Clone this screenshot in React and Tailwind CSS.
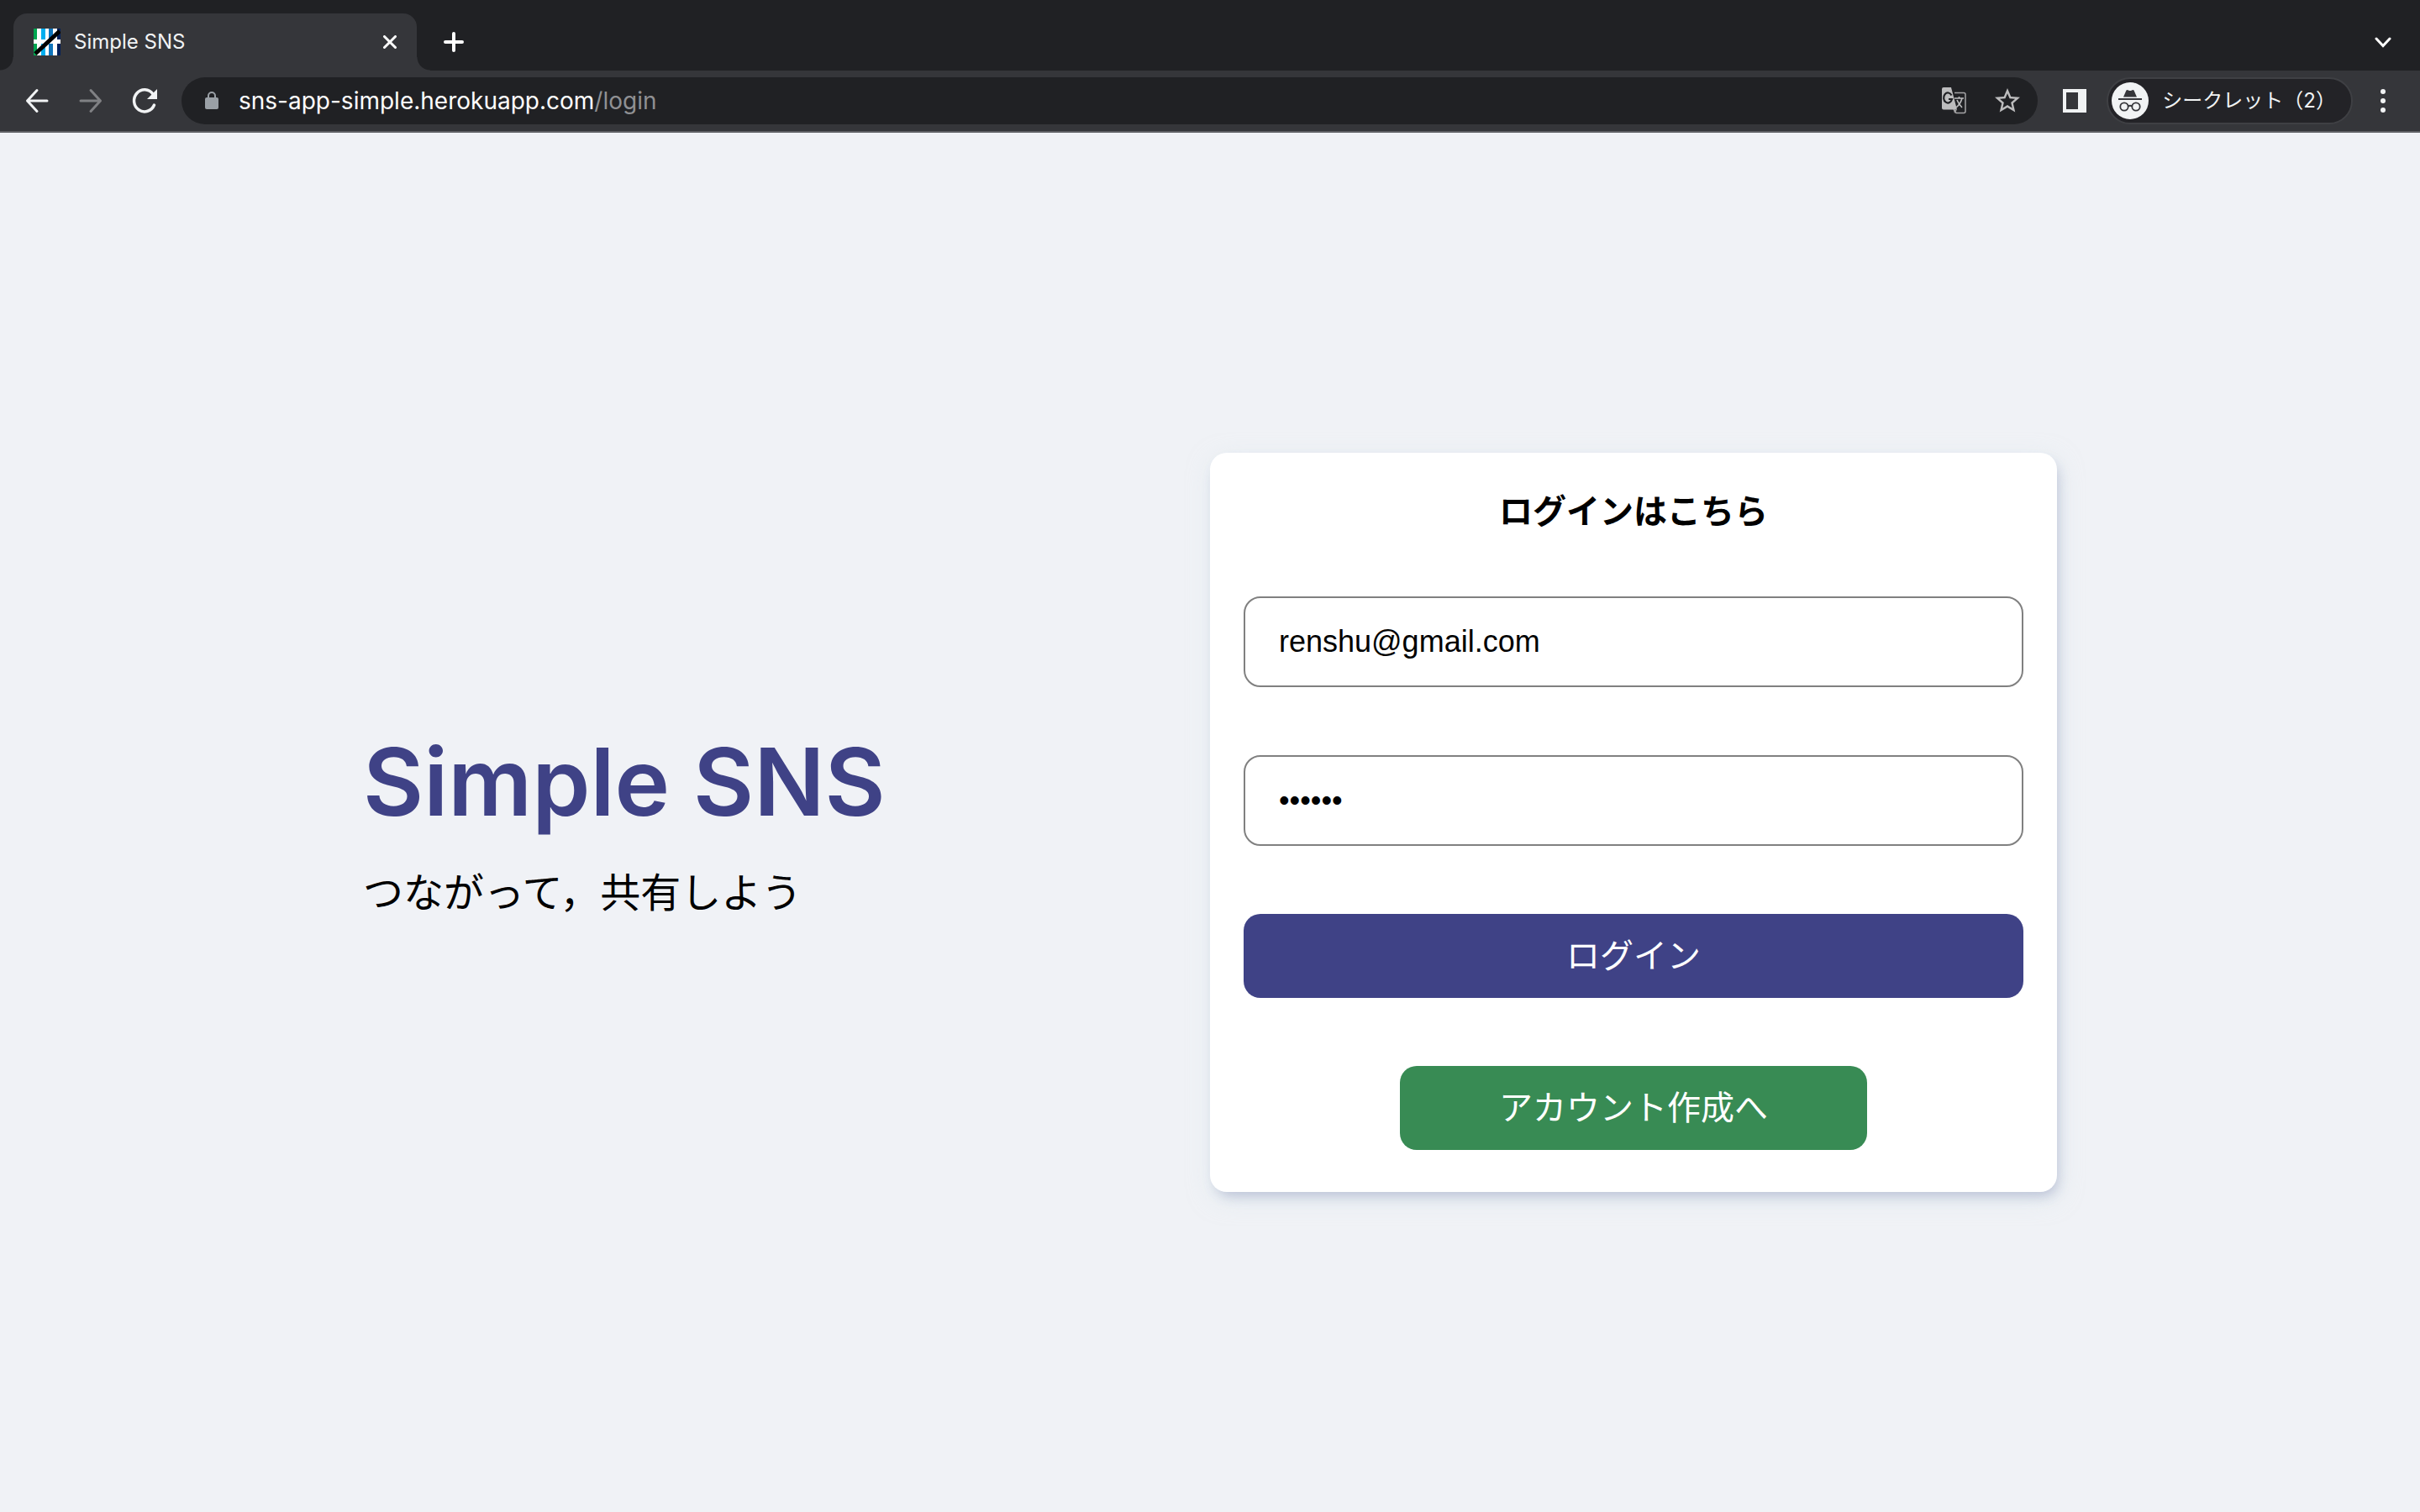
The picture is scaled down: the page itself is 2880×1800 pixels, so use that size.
import React from "react";

const jp = "font-[Inter,'Noto_Sans_CJK_JP',sans-serif]";

function Favicon() {
  return (
    <svg width="32" height="32" viewBox="0 0 32 32" aria-hidden="true" className="shrink-0">
      <rect width="32" height="32" fill="#fff" />
      <rect x="0" width="4" height="32" fill="#00a651" />
      <rect x="9" width="5" height="32" fill="#00aeef" />
      <rect x="18" width="5" height="32" fill="#0f75bc" />
      <rect x="28" width="4" height="32" fill="#00205b" />
      <rect y="13" width="32" height="5" fill="#fff" />
      <path d="M2 30 L31 3" stroke="#000" strokeWidth="5" />
    </svg>
  );
}

function TabStrip() {
  return (
    <header className="flex h-[84px] items-end bg-[#202124] pl-4 pr-8">
      <div className="relative flex h-[68px] w-[480px] items-center rounded-t-[16px] bg-[#35363a] pl-6 pr-6">
        <span className="absolute -left-4 bottom-0 size-4 bg-[radial-gradient(circle_at_0_0,#202124_15px,#35363a_16px)]" />
        <span className="absolute -right-4 bottom-0 size-4 bg-[radial-gradient(circle_at_100%_0,#202124_15px,#35363a_16px)]" />
        <Favicon />
        <span className="ml-4 flex-1 text-2xl text-[#f1f3f4]">Simple SNS</span>
        <button aria-label="Close tab" className="text-white">
          <svg width="16" height="16" viewBox="0 0 16 16" fill="none" stroke="currentColor" strokeWidth="3" strokeLinecap="round">
            <path d="M1.5 1.5 L14.5 14.5 M14.5 1.5 L1.5 14.5" />
          </svg>
        </button>
      </div>
      <button aria-label="New tab" className="ml-8 flex h-[68px] items-center text-white">
        <svg width="24" height="24" viewBox="0 0 24 24" fill="none" stroke="currentColor" strokeWidth="4" strokeLinecap="round">
          <path d="M12 2 V22 M2 12 H22" />
        </svg>
      </button>
      <button aria-label="Search tabs" className="ml-auto flex h-[68px] w-6 items-center justify-center text-white">
        <svg width="20" height="14" viewBox="0 0 20 14" fill="none" stroke="currentColor" strokeWidth="3" strokeLinecap="round">
          <path d="M2 3 L10 11.500 L18 3" />
        </svg>
      </button>
    </header>
  );
}

function Toolbar() {
  return (
    <nav className="flex h-[74px] items-center border-b-2 border-[#5f6064] bg-[#35363a] pl-7 pr-10">
      <button aria-label="Back" className="text-[#f1f3f4]">
        <svg width="32" height="32" viewBox="0 0 32 32" fill="none" stroke="currentColor" strokeWidth="3" strokeLinecap="round" strokeLinejoin="round">
          <path d="M28 16 H5 M16 3.500 L4.500 16 L16 28.500" />
        </svg>
      </button>
      <button aria-label="Forward" className="ml-8 text-[#808184]">
        <svg width="32" height="32" viewBox="0 0 32 32" fill="none" stroke="currentColor" strokeWidth="3" strokeLinecap="round" strokeLinejoin="round">
          <path d="M4 16 H27 M16 3.500 L27.500 16 L16 28.500" />
        </svg>
      </button>
      <button aria-label="Reload" className="ml-8 text-[#f1f3f4]">
        <svg width="32" height="32" viewBox="-1 0 32 32" fill="none">
          <path d="M26.500 21 A12.500 13 0 1 1 25 8" stroke="currentColor" strokeWidth="3.500" strokeLinecap="round" />
          <path d="M30 2 V14 H18 Z" fill="currentColor" />
        </svg>
      </button>

      <div className="ml-7 flex h-14 flex-1 items-center rounded-full bg-[#202124] pl-7 pr-[18px]">
        <svg width="16" height="22" viewBox="0 0 16 22" aria-hidden="true" className="shrink-0 text-[#9aa0a6]">
          <rect y="7" width="16" height="14" rx="2" fill="currentColor" />
          <path d="M4 8 V5 A4 4 0 0 1 12 5 V8" fill="none" stroke="currentColor" strokeWidth="2" />
        </svg>
        <a href="#login" className="ml-6 flex-1 text-[28px] leading-9 text-white">
          sns-app-simple.herokuapp.com<span className="text-[#8f9093]">/login</span>
        </a>
        <button aria-label="Translate this page" className="text-[#bdc1c6]">
          <svg width="30" height="32" viewBox="0 0 30 32" fill="none">
            <path d="M15 6.500 H26 Q28 6.500 28 8.500 V28.500 Q28 30.500 26 30.500 H17 L14 26" stroke="#a5a5a6" strokeWidth="1.500" />
            <path d="M2 0 H11 L18 26.500 H2 Q0 26.500 0 24.500 V2 Q0 0 2 0 Z" fill="#bdbdbe" />
            <path d="M14 26.500 H18 L15 31 Z" fill="#a5a5a6" />
            <path d="M11.500 9.500 A5 6 0 1 0 12 14 H8" stroke="#202124" strokeWidth="2.200" />
            <path d="M15 13 H26 M20.500 11 V13 M24 13 Q22 20 17 24 M18 15 Q20 20 24 24" stroke="#bdbdbe" strokeWidth="1.600" />
          </svg>
        </button>
        <button aria-label="Bookmark this tab" className="ml-[30px] text-[#bdbdbe]">
          <svg width="36" height="36" viewBox="0 0 24 24" fill="currentColor">
            <path d="M22 9.240l-7.190-.62L12 2 9.190 8.630 2 9.240l5.460 4.730L5.820 21 12 17.270 18.180 21l-1.630-7.030L22 9.240zM12 15.400l-3.760 2.270 1-4.280-3.320-2.880 4.380-.38L12 6.100l1.710 4.040 4.380.38-3.320 2.880 1 4.280L12 15.400z" />
          </svg>
        </button>
      </div>

      <button aria-label="Side panel" className="ml-[30px] text-[#f1f3f4]">
        <svg width="28" height="28" viewBox="0 0 28 28">
          <path fillRule="evenodd" d="M0 0 H28 V28 H0 Z M4 4 V24 H18 V4 Z" fill="currentColor" />
        </svg>
      </button>
      <button className="ml-6 flex h-14 items-center rounded-full border-2 border-[#3f4044] bg-[#232327] pl-1 pr-[18px] text-2xl text-[#f1f3f4]">
        <svg width="44" height="44" viewBox="0 0 44 44" aria-hidden="true">
          <circle cx="22" cy="22" r="22" fill="#f1f3f4" />
          <path d="M14 17.500 L17.500 9.500 Q18.500 8.500 20 9.500 Q22 10.500 24 9.500 Q25.500 8.500 26.500 9.500 L30 17.500 Z" fill="#35363a" />
          <path d="M8 20 H36" stroke="#35363a" strokeWidth="2" />
          <g fill="none" stroke="#35363a" strokeWidth="1.800">
            <circle cx="15" cy="29" r="4.700" />
            <circle cx="29" cy="29" r="4.700" />
            <path d="M19.500 28.500 Q22 27 24.500 28.500" />
          </g>
        </svg>
        <span className="ml-4">シークレット（2）</span>
      </button>
      <button aria-label="Menu" className="ml-8 text-[#f1f3f4]">
        <svg width="8" height="28" viewBox="0 0 8 28" fill="currentColor">
          <circle cx="4" cy="3" r="3" />
          <circle cx="4" cy="14" r="3" />
          <circle cx="4" cy="25" r="3" />
        </svg>
      </button>
    </nav>
  );
}

const field =
  "h-[108px] w-full rounded-[20px] border-2 border-[#808080] bg-white px-10 font-['Liberation_Sans',sans-serif] text-4xl text-black outline-none";

function LoginCard() {
  return (
    <form
      onSubmit={(e) => e.preventDefault()}
      className="w-1/2 rounded-[20px] bg-white px-10 pt-10 pb-[50px] shadow-[4px_8px_16px_-4px_rgba(60,66,134,0.28),2px_8px_28px_0_rgba(215,234,238,0.5)]"
    >
      <h2 className="text-center text-[40px] leading-[60px] font-bold text-black">ログインはこちら</h2>
      <div className="mt-[71px] flex flex-col items-center gap-[81px]">
        <input type="email" aria-label="メールアドレス" defaultValue="renshu@gmail.com" className={field} />
        <input type="password" aria-label="パスワード" defaultValue="renshu" className={field} />
        <button type="submit" className="h-[100px] w-full rounded-[20px] bg-[#3f4286] text-[40px] text-white">
          ログイン
        </button>
        <button type="button" className="h-[100px] w-3/5 rounded-[20px] bg-[#388b54] text-[40px] text-white">
          アカウント作成へ
        </button>
      </div>
    </form>
  );
}

export default function App() {
  return (
    <div className={`flex min-h-screen flex-col bg-[#f0f2f6] ${jp}`}>
      <TabStrip />
      <Toolbar />
      <main className="flex flex-1 items-center justify-center">
        <div className="flex w-[70%] items-center">
          <section className="w-1/2">
            <h1 className="text-[111px] leading-[136px] font-semibold text-[#3f4286]">Simple SNS</h1>
            <p className="mt-8 text-5xl leading-[64px] text-black">つながって，共有しよう</p>
          </section>
          <LoginCard />
        </div>
      </main>
    </div>
  );
}
